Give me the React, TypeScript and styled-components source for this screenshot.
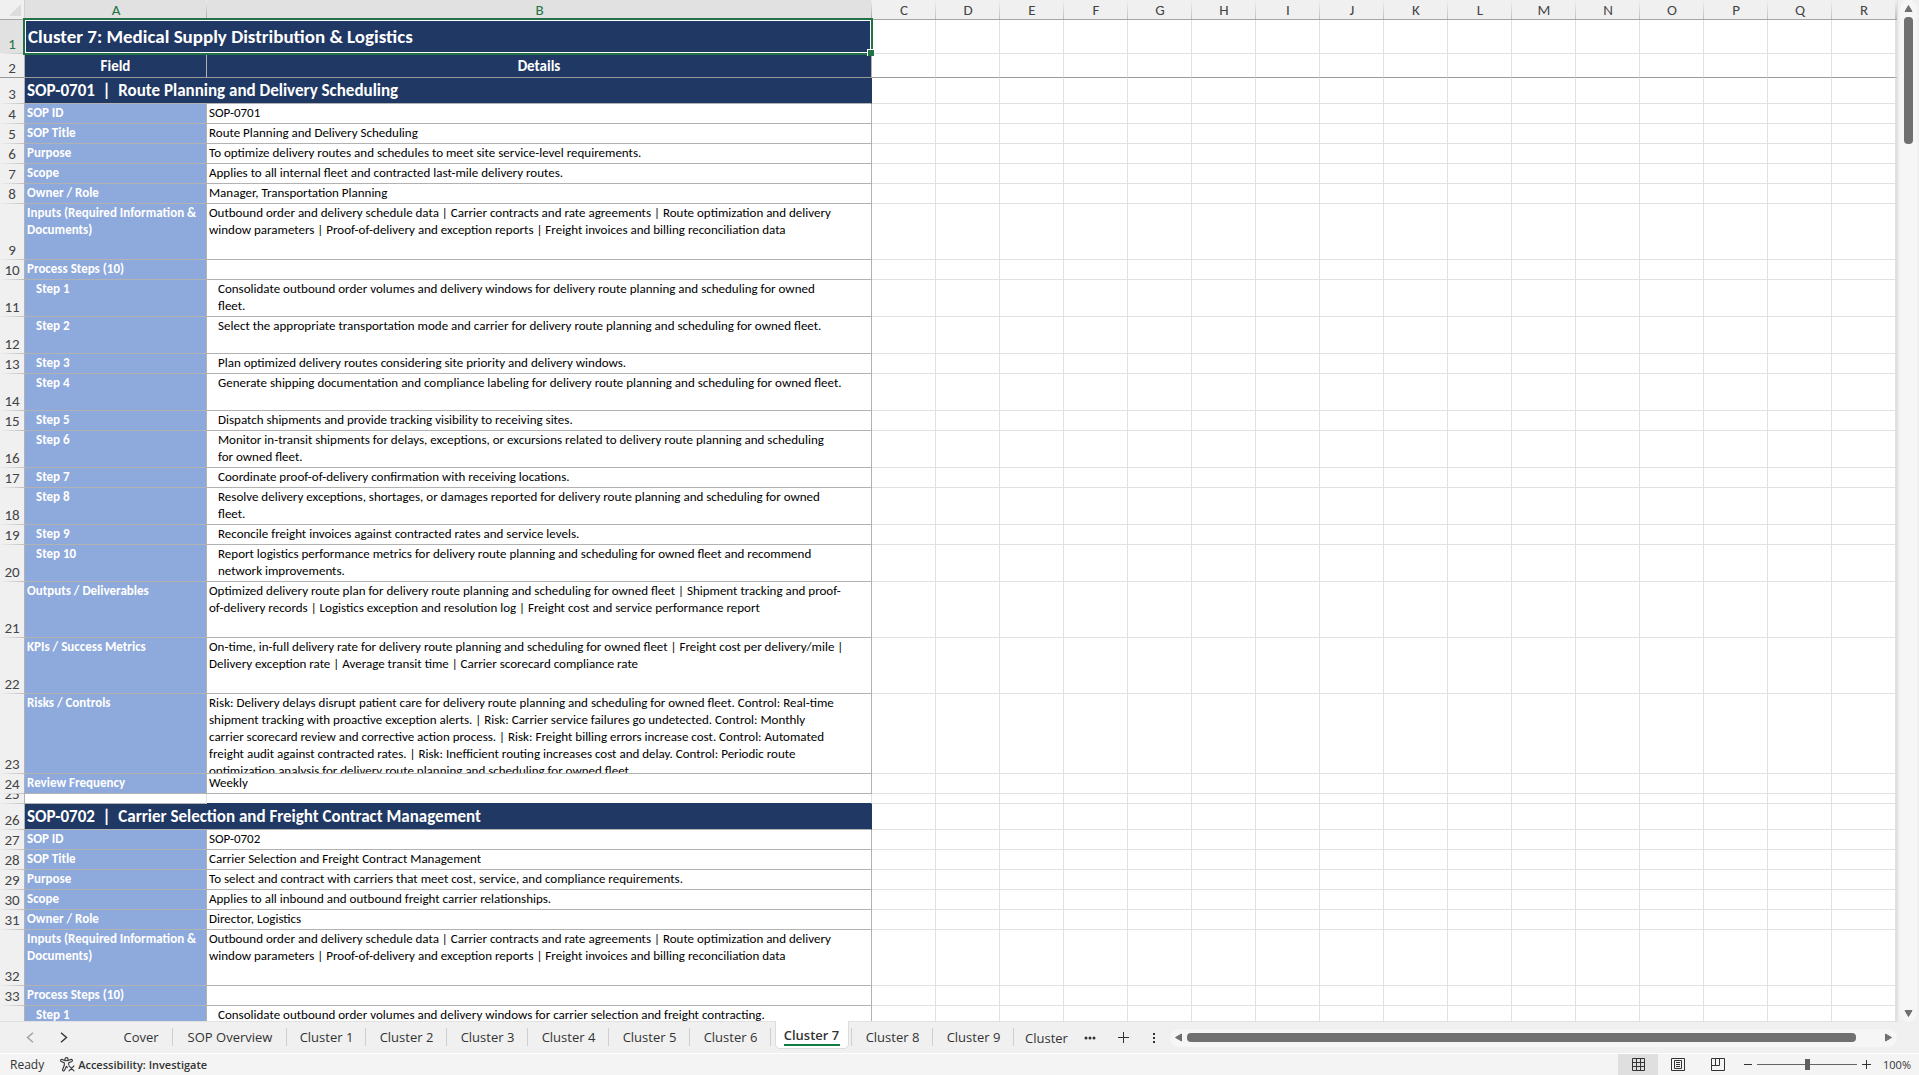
import React, { useState } from 'react';
import styled, { createGlobalStyle, css } from 'styled-components';

const navy = '#203864';
const blue = '#8ea9db';
const cellLine = '#b2b2b2';
const gridLine = '#e1e1e1';
const chrome = '#f0f0f0';
const track = '#f6f6f6';
const thumb = '#707070';
const green = '#217346';

const sheetFont = "Carlito, Calibri, Lato, sans-serif";
const uiFont = "'Open Sans', 'Noto Sans', sans-serif";

const GlobalStyle = createGlobalStyle`
  * { box-sizing: border-box; }
  body { margin: 0; background: ${chrome}; }
  button { font: inherit; color: inherit; border: 0; padding: 0; background: none; cursor: pointer; }
`;

/* ---------- data ---------- */

type Kind = 'title' | 'header' | 'section' | 'field' | 'step' | 'blank';

interface SheetRow {
  kind: Kind;
  h: number;
  label?: string;
  lines?: string[];
}

const field = (label: string, h: number, ...lines: string[]): SheetRow => ({ kind: 'field', h, label, lines });
const step = (n: number, h: number, ...lines: string[]): SheetRow => ({ kind: 'step', h, label: `Step ${n}`, lines });
const section = (label: string): SheetRow => ({ kind: 'section', h: 26, label });

const inputLines = [
  'Outbound order and delivery schedule data | Carrier contracts and rate agreements | Route optimization and delivery',
  'window parameters | Proof-of-delivery and exception reports | Freight invoices and billing reconciliation data',
];

const rows: SheetRow[] = [
  { kind: 'title', h: 34, label: 'Cluster 7: Medical Supply Distribution & Logistics' },
  { kind: 'header', h: 24, label: 'Field', lines: ['Details'] },
  section('SOP-0701  |  Route Planning and Delivery Scheduling'),
  field('SOP ID', 20, 'SOP-0701'),
  field('SOP Title', 20, 'Route Planning and Delivery Scheduling'),
  field('Purpose', 20, 'To optimize delivery routes and schedules to meet site service-level requirements.'),
  field('Scope', 20, 'Applies to all internal fleet and contracted last-mile delivery routes.'),
  field('Owner / Role', 20, 'Manager, Transportation Planning'),
  field('Inputs (Required Information & Documents)', 56, ...inputLines),
  field('Process Steps (10)', 20),
  step(1, 37, 'Consolidate outbound order volumes and delivery windows for delivery route planning and scheduling for owned', 'fleet.'),
  step(2, 37, 'Select the appropriate transportation mode and carrier for delivery route planning and scheduling for owned fleet.'),
  step(3, 20, 'Plan optimized delivery routes considering site priority and delivery windows.'),
  step(4, 37, 'Generate shipping documentation and compliance labeling for delivery route planning and scheduling for owned fleet.'),
  step(5, 20, 'Dispatch shipments and provide tracking visibility to receiving sites.'),
  step(6, 37, 'Monitor in-transit shipments for delays, exceptions, or excursions related to delivery route planning and scheduling', 'for owned fleet.'),
  step(7, 20, 'Coordinate proof-of-delivery confirmation with receiving locations.'),
  step(8, 37, 'Resolve delivery exceptions, shortages, or damages reported for delivery route planning and scheduling for owned', 'fleet.'),
  step(9, 20, 'Reconcile freight invoices against contracted rates and service levels.'),
  step(10, 37, 'Report logistics performance metrics for delivery route planning and scheduling for owned fleet and recommend', 'network improvements.'),
  field('Outputs / Deliverables', 56,
    'Optimized delivery route plan for delivery route planning and scheduling for owned fleet | Shipment tracking and proof-',
    'of-delivery records | Logistics exception and resolution log | Freight cost and service performance report'),
  field('KPIs / Success Metrics', 56,
    'On-time, in-full delivery rate for delivery route planning and scheduling for owned fleet | Freight cost per delivery/mile |',
    'Delivery exception rate | Average transit time | Carrier scorecard compliance rate'),
  field('Risks / Controls', 80,
    'Risk: Delivery delays disrupt patient care for delivery route planning and scheduling for owned fleet. Control: Real-time',
    'shipment tracking with proactive exception alerts. | Risk: Carrier service failures go undetected. Control: Monthly',
    'carrier scorecard review and corrective action process. | Risk: Freight billing errors increase cost. Control: Automated',
    'freight audit against contracted rates. | Risk: Inefficient routing increases cost and delay. Control: Periodic route',
    'optimization analysis for delivery route planning and scheduling for owned fleet.'),
  field('Review Frequency', 20, 'Weekly'),
  { kind: 'blank', h: 10 },
  section('SOP-0702  |  Carrier Selection and Freight Contract Management'),
  field('SOP ID', 20, 'SOP-0702'),
  field('SOP Title', 20, 'Carrier Selection and Freight Contract Management'),
  field('Purpose', 20, 'To select and contract with carriers that meet cost, service, and compliance requirements.'),
  field('Scope', 20, 'Applies to all inbound and outbound freight carrier relationships.'),
  field('Owner / Role', 20, 'Director, Logistics'),
  field('Inputs (Required Information & Documents)', 56, ...inputLines),
  field('Process Steps (10)', 20),
  step(1, 37, 'Consolidate outbound order volumes and delivery windows for carrier selection and freight contracting.'),
];

const spareColumns = 'CDEFGHIJKLMNOPQR'.split('');

const tabs = [
  { name: 'Cover', width: 64 },
  { name: 'SOP Overview', width: 114 },
  { name: 'Cluster 1', width: 79 },
  ...[2, 3, 4, 5, 6, 7, 8, 9].map((n) => ({ name: `Cluster ${n}`, width: 81 })),
];

/* ---------- sheet ---------- */

const Workbook = styled.div`
  display: flex;
  flex-direction: column;
  height: 100vh;
  overflow: hidden;
  background: ${chrome};
`;

const SheetArea = styled.main`
  display: flex;
  flex: 1;
  min-height: 0;
`;

const Viewport = styled.div`
  flex: 1;
  min-width: 0;
  overflow: hidden;
  background: #fff;
  border-right: 1px solid ${gridLine};
  border-bottom: 1px solid ${gridLine};
`;

const Grid = styled.table`
  width: 100%;
  table-layout: fixed;
  border-collapse: separate;
  border-spacing: 0;
  font: 13px/17px ${sheetFont};
  color: #000;

  th, td { padding: 0; vertical-align: top; text-align: left; }
`;

const Col = styled.col<{ $w?: number }>`
  width: ${(p) => (p.$w ? `${p.$w}px` : 'auto')};
`;

const Corner = styled.td`
  height: 20px;
  background: ${chrome};
  border-right: 1px solid #d0d0d0;
  border-bottom: 1px solid #a6a6a6;
`;

const CornerMark = styled.svg`
  display: block;
  margin: 4px 3px 0 9px;
`;

const ColumnHead = styled.th<{ $selected?: boolean }>`
  height: 20px;
  border-bottom: 1px solid #a6a6a6;
  background: linear-gradient(to bottom, ${chrome}, ${(p) => (p.$selected ? '#a6a6a6' : '#c0c0c0')}) right / 1px 100% no-repeat,
    ${(p) => (p.$selected ? '#e1e1e1' : chrome)};
  color: ${(p) => (p.$selected ? green : '#444')};
  font-size: 15px;
  font-weight: 400;
  line-height: 18px;

  && { padding-top: 1px; text-align: center; }
`;

const RowHead = styled.th<{ $selected?: boolean; $frozen?: boolean }>`
  border-right: 1px solid ${cellLine};
  background: ${(p) =>
    p.$frozen
      ? `linear-gradient(#999, #999) bottom / 100% 1px no-repeat, ${chrome}`
      : `linear-gradient(to right, ${chrome}, #c0c0c0) bottom / 100% 1px no-repeat, ${p.$selected ? '#e1e1e1' : chrome}`};
  color: ${(p) => (p.$selected ? green : '#444')};
`;

const RowNumber = styled.div<{ $h: number }>`
  display: flex;
  align-items: flex-end;
  justify-content: center;
  height: ${(p) => p.$h - 1}px;
  margin-bottom: 1px;
  overflow: hidden;
  font-size: 15px;
  font-weight: 400;
  line-height: 18px;
`;

const Cell = styled.td<{ $kind: Kind }>`
  border-right: 1px solid ${cellLine};
  border-bottom: 1px solid ${cellLine};

  ${(p) => p.$kind === 'header' && css`
    background: ${navy};
    color: #fff;
    border-bottom-color: #999;
  `}
  ${(p) => (p.$kind === 'section' || p.$kind === 'title') && css`
    position: relative;
    background: ${navy};
    color: #fff;
    border-right-color: ${navy};
  `}
  ${(p) => p.$kind === 'blank' && css`
    border-right-color: ${gridLine};
  `}
`;

const LabelCell = styled(Cell)`
  ${(p) => (p.$kind === 'field' || p.$kind === 'step') && css`
    background: ${blue};
    color: #fff;
  `}
`;

const BlankDetail = styled(Cell)`
  border-bottom-color: ${navy};
`;

const SpareCell = styled.td<{ $frozen?: boolean }>`
  border-right: 1px solid ${gridLine};
  border-bottom: 1px solid ${(p) => (p.$frozen ? '#999' : gridLine)};
`;

const textStyles: Record<Kind, ReturnType<typeof css>> = {
  title: css`display: flex; align-items: center; padding-left: 3px; font-size: 19px; font-weight: 700;`,
  header: css`display: flex; align-items: center; justify-content: center; padding-top: 2px; font-size: 15px; font-weight: 700;`,
  section: css`display: flex; align-items: center; font-size: 17px; font-weight: 700; white-space: pre;`,
  field: css``,
  step: css`padding-left: 11px;`,
  blank: css``,
};

const CellText = styled.div<{ $h: number; $kind: Kind; $strong?: boolean }>`
  height: ${(p) => p.$h - 1}px;
  padding: 0 2px;
  overflow: hidden;
  font-weight: ${(p) => (p.$strong ? 700 : 400)};
  ${(p) => textStyles[p.$kind]}
`;

const Line = styled.div`
  white-space: nowrap;
`;

const Selection = styled.div`
  position: absolute;
  z-index: 1;
  inset: -2px;
  border: 2px solid ${green};
  box-shadow: inset 0 0 0 1px #fff;
  pointer-events: none;

  &::after {
    content: '';
    position: absolute;
    right: -3px;
    bottom: -3px;
    width: 6px;
    height: 6px;
    background: ${green};
    border-top: 1px solid #fff;
    border-left: 1px solid #fff;
  }
`;

/* ---------- scroll bars ---------- */

const VerticalGutter = styled.div`
  display: flex;
  flex: none;
  width: 21px;
  padding: 0 2px;
`;

const VerticalTrack = styled.div`
  display: flex;
  flex: 1;
  flex-direction: column;
  align-items: center;
  padding: 4px 0;
  background: ${track};
  border-radius: 9px;
`;

const HorizontalTrack = styled.div`
  display: flex;
  flex: 1;
  align-items: center;
  height: 18px;
  margin-right: 22px;
  padding: 0 4px;
  background: ${track};
  border-radius: 9px;
`;

const ScrollArrow = styled.button`
  display: flex;
  flex: none;
  align-items: center;
  justify-content: center;
  width: 9px;
  height: 9px;
`;

const VerticalThumb = styled.div`
  width: 9px;
  height: 127px;
  margin: 4px 0 auto;
  background: ${thumb};
  border-radius: 4px;
`;

const HorizontalThumb = styled.div`
  flex: 1;
  height: 9px;
  margin: 0 28px 0 4px;
  background: ${thumb};
  border-radius: 4px;
`;

/* ---------- tab bar ---------- */

const TabBar = styled.footer`
  display: flex;
  flex: none;
  align-items: center;
  height: 31px;
  color: #333;
  font: 13px/18px ${uiFont};
`;

const TabArrows = styled.div`
  display: flex;
  flex: none;
  gap: 18px;
  width: 109px;
  padding-left: 22px;
`;

const TabArrow = styled.button<{ $dim?: boolean }>`
  display: flex;
  align-items: center;
  justify-content: center;
  width: 16px;
  height: 18px;
  color: ${(p) => (p.$dim ? '#a0a0a0' : '#333')};
`;

const TabList = styled.nav`
  display: flex;
  flex: none;
  align-self: stretch;
`;

const TabSlot = styled.div<{ $w: number }>`
  position: relative;
  display: flex;
  align-items: center;
  justify-content: center;
  width: ${(p) => p.$w}px;

  &::after {
    content: '';
    position: absolute;
    right: 0;
    top: 6px;
    width: 1px;
    height: 18px;
    background: #cfcfcf;
  }
`;

const Tab = styled.button`
  line-height: 31px;
  white-space: nowrap;
`;

const ActiveTab = styled.button`
  align-self: flex-start;
  height: 28px;
  margin-top: -1px;
  padding: 0 8px;
  background: #fff;
  border: 1px solid #dcdcdc;
  border-top: 0;
  border-radius: 0 0 5px 5px;
  font-weight: 600;
  white-space: nowrap;
`;

const ActiveName = styled.span`
  display: block;
  width: 56px;
  height: 22px;
  line-height: 22px;
  border-bottom: 2px solid #107c41;
`;

const CutTab = styled.button`
  width: 58px;
  padding-left: 11px;
  overflow: hidden;
  text-align: left;
  white-space: nowrap;
`;

const BarButton = styled.button<{ $w: number }>`
  display: flex;
  flex: none;
  align-items: center;
  justify-content: center;
  width: ${(p) => p.$w}px;
  height: 24px;
`;

/* ---------- status bar ---------- */

const StatusBar = styled.section`
  display: flex;
  flex: none;
  align-items: center;
  height: 22px;
  padding: 0 8px 0 10px;
  background: #f4f4f4;
  border-top: 1px solid #fff;
  color: #333;
  font: 12px/20px ${uiFont};
`;

const AccessButton = styled.button`
  display: flex;
  align-items: center;
  gap: 3px;
  margin: 0 auto 0 16px;
  font-size: 11px;
  font-weight: 600;
`;

const ViewButton = styled.button<{ $on?: boolean }>`
  display: flex;
  align-items: center;
  justify-content: center;
  width: 40px;
  height: 21px;
  background: ${(p) => (p.$on ? '#dfdfdf' : 'transparent')};
`;

const ZoomGroup = styled.div`
  display: flex;
  align-items: center;
  gap: 5px;
  margin: 0 12px 0 6px;
`;

const ZoomSlider = styled.input`
  appearance: none;
  width: 100px;
  height: 13px;
  margin: 0;
  background: linear-gradient(#666, #666) center / 100% 1px no-repeat;

  &::-webkit-slider-thumb {
    appearance: none;
    width: 5px;
    height: 11px;
    background: #5f5f5f;
  }
`;

const ZoomValue = styled.button`
  width: 28px;
  font-size: 11px;
  white-space: nowrap;
`;

/* ---------- icons ---------- */

const Triangle = ({ d }: { d: string }) => (
  <svg width="9" height="9" viewBox="0 0 9 9" aria-hidden="true">
    <path d={d} fill={thumb} stroke={thumb} strokeLinejoin="round" />
  </svg>
);

const Stroke = ({ w, h, d, width = 1 }: { w: number; h: number; d: string; width?: number }) => (
  <svg width={w} height={h} viewBox={`0 0 ${w} ${h}`} fill="none" stroke="currentColor" strokeWidth={width} aria-hidden="true">
    <path d={d} />
  </svg>
);

const AccessIcon = () => (
  <svg width="15" height="15" viewBox="0 0 15 15" fill="none" stroke="#333" strokeWidth="1.1" strokeLinecap="round" strokeLinejoin="round" aria-hidden="true">
    <circle cx="6.5" cy="2.2" r="1.6" />
    <path d="M4.9 3.6 2.2 2.5C.9 2-.1 3.7 1.2 4.4L4.3 5.8V8.3L2.6 12.5C2.2 13.9 3.9 14.5 4.5 13.3L6.5 9.2L7.3 10.6" />
    <path d="M8.1 3.6 10.8 2.5C12.1 2 13.1 3.7 11.8 4.4L8.7 5.8V7.6" />
    <path d="M9 8.9 14 13.9M14 8.9 9 13.9" />
  </svg>
);

/* ---------- components ---------- */

function DataCells({ row }: { row: SheetRow }) {
  if (row.kind === 'title' || row.kind === 'section') {
    return (
      <Cell $kind={row.kind} colSpan={2}>
        <CellText $h={row.h} $kind={row.kind} $strong>{row.label}</CellText>
        {row.kind === 'title' && <Selection />}
      </Cell>
    );
  }
  if (row.kind === 'blank') {
    return (
      <>
        <Cell $kind="blank" />
        <BlankDetail $kind="blank" />
      </>
    );
  }
  return (
    <>
      <LabelCell $kind={row.kind}>
        <CellText $h={row.h} $kind={row.kind} $strong>{row.label}</CellText>
      </LabelCell>
      <Cell $kind={row.kind}>
        <CellText $h={row.h} $kind={row.kind} $strong={row.kind === 'header'}>
          {row.lines?.map((line) => <Line key={line}>{line}</Line>)}
        </CellText>
      </Cell>
    </>
  );
}

function Sheet() {
  return (
    <Viewport>
      <Grid>
        <colgroup>
          <Col $w={25} />
          <Col $w={182} />
          <Col $w={665} />
          {spareColumns.map((c) => <Col key={c} $w={64} />)}
          <Col />
        </colgroup>
        <thead>
          <tr>
            <Corner>
              <CornerMark width="12" height="12" viewBox="0 0 12 12" aria-hidden="true">
                <path d="M12 0V12H0Z" fill="#dcdcdc" />
              </CornerMark>
            </Corner>
            <ColumnHead $selected scope="col">A</ColumnHead>
            <ColumnHead $selected scope="col">B</ColumnHead>
            {spareColumns.map((c) => <ColumnHead key={c} scope="col">{c}</ColumnHead>)}
            <ColumnHead as="td" />
          </tr>
        </thead>
        <tbody>
          {rows.map((row, i) => {
            const frozen = row.kind === 'header';
            return (
              <tr key={i}>
                <RowHead scope="row" $selected={i === 0} $frozen={frozen}>
                  <RowNumber $h={row.h}>{i + 1}</RowNumber>
                </RowHead>
                <DataCells row={row} />
                {spareColumns.map((c) => <SpareCell key={c} $frozen={frozen} />)}
                <SpareCell $frozen={frozen} />
              </tr>
            );
          })}
        </tbody>
      </Grid>
    </Viewport>
  );
}

export default function App() {
  const [active, setActive] = useState('Cluster 7');
  const [zoom, setZoom] = useState(100);

  return (
    <Workbook>
      <GlobalStyle />
      <SheetArea>
        <Sheet />
        <VerticalGutter>
          <VerticalTrack>
            <ScrollArrow aria-label="Scroll up"><Triangle d="M4.5 1.5 8 7.5H1Z" /></ScrollArrow>
            <VerticalThumb />
            <ScrollArrow aria-label="Scroll down"><Triangle d="M4.5 7.5 1 1.5H8Z" /></ScrollArrow>
          </VerticalTrack>
        </VerticalGutter>
      </SheetArea>

      <TabBar>
        <TabArrows>
          <TabArrow $dim aria-label="Previous sheets"><Stroke w={8} h={11} width={1.4} d="M7 .8 1.5 5.5 7 10.2" /></TabArrow>
          <TabArrow aria-label="Next sheets"><Stroke w={8} h={11} width={1.4} d="M1 .8 6.5 5.5 1 10.2" /></TabArrow>
        </TabArrows>
        <TabList aria-label="Sheets">
          {tabs.map((tab) => (
            <TabSlot key={tab.name} $w={tab.width}>
              {tab.name === active ? (
                <ActiveTab aria-current="page"><ActiveName>{tab.name}</ActiveName></ActiveTab>
              ) : (
                <Tab onClick={() => setActive(tab.name)}>{tab.name}</Tab>
              )}
            </TabSlot>
          ))}
          <CutTab>Cluster 10</CutTab>
        </TabList>
        <BarButton $w={36} aria-label="More sheets">
          <svg width="12" height="4" viewBox="0 0 12 4" fill="#333" aria-hidden="true">
            <circle cx="2" cy="2" r="1.5" /><circle cx="6" cy="2" r="1.5" /><circle cx="10" cy="2" r="1.5" />
          </svg>
        </BarButton>
        <BarButton $w={30} aria-label="New sheet"><Stroke w={11} h={11} d="M5.5 0V11M0 5.5H11" /></BarButton>
        <BarButton $w={32} aria-label="Resize tab bar">
          <svg width="2" height="10" viewBox="0 0 2 10" fill="#333" aria-hidden="true">
            <path d="M0 0h2v2H0zM0 4h2v2H0zM0 8h2v2H0z" />
          </svg>
        </BarButton>
        <HorizontalTrack>
          <ScrollArrow aria-label="Scroll left"><Triangle d="M1.5 4.5 7.5 1V8Z" /></ScrollArrow>
          <HorizontalThumb />
          <ScrollArrow aria-label="Scroll right"><Triangle d="M7.5 4.5 1.5 1V8Z" /></ScrollArrow>
        </HorizontalTrack>
      </TabBar>

      <StatusBar>
        <span>Ready</span>
        <AccessButton><AccessIcon />Accessibility: Investigate</AccessButton>
        <ViewButton $on aria-label="Normal view">
          <Stroke w={13} h={13} d="M.5 .5H12.5V12.5H.5ZM.5 4.5H12.5M.5 8.5H12.5M4.5 .5V12.5M8.5 .5V12.5" />
        </ViewButton>
        <ViewButton aria-label="Page layout view">
          <Stroke w={14} h={13} d="M.5 .5H13.5V12.5H.5ZM3.5 2.5H10.5V10.5H3.5ZM5 4.5H9M5 6.5H9M5 8.5H9" />
        </ViewButton>
        <ViewButton aria-label="Page break preview">
          <Stroke w={14} h={13} d="M.5 .5H13.5V12.5H.5ZM.5 7.5H8.5V.5M4.5 .5V7.5" />
        </ViewButton>
        <ZoomGroup>
          <button aria-label="Zoom out" onClick={() => setZoom(Math.max(10, zoom - 10))}><Stroke w={8} h={9} d="M0 4.5H8" /></button>
          <ZoomSlider type="range" aria-label="Zoom" min={0} max={200} value={zoom} onChange={(e) => setZoom(Number(e.target.value))} />
          <button aria-label="Zoom in" onClick={() => setZoom(Math.min(200, zoom + 10))}><Stroke w={9} h={9} d="M4.5 0V9M0 4.5H9" /></button>
        </ZoomGroup>
        <ZoomValue aria-label="Zoom level">{zoom}%</ZoomValue>
      </StatusBar>
    </Workbook>
  );
}
